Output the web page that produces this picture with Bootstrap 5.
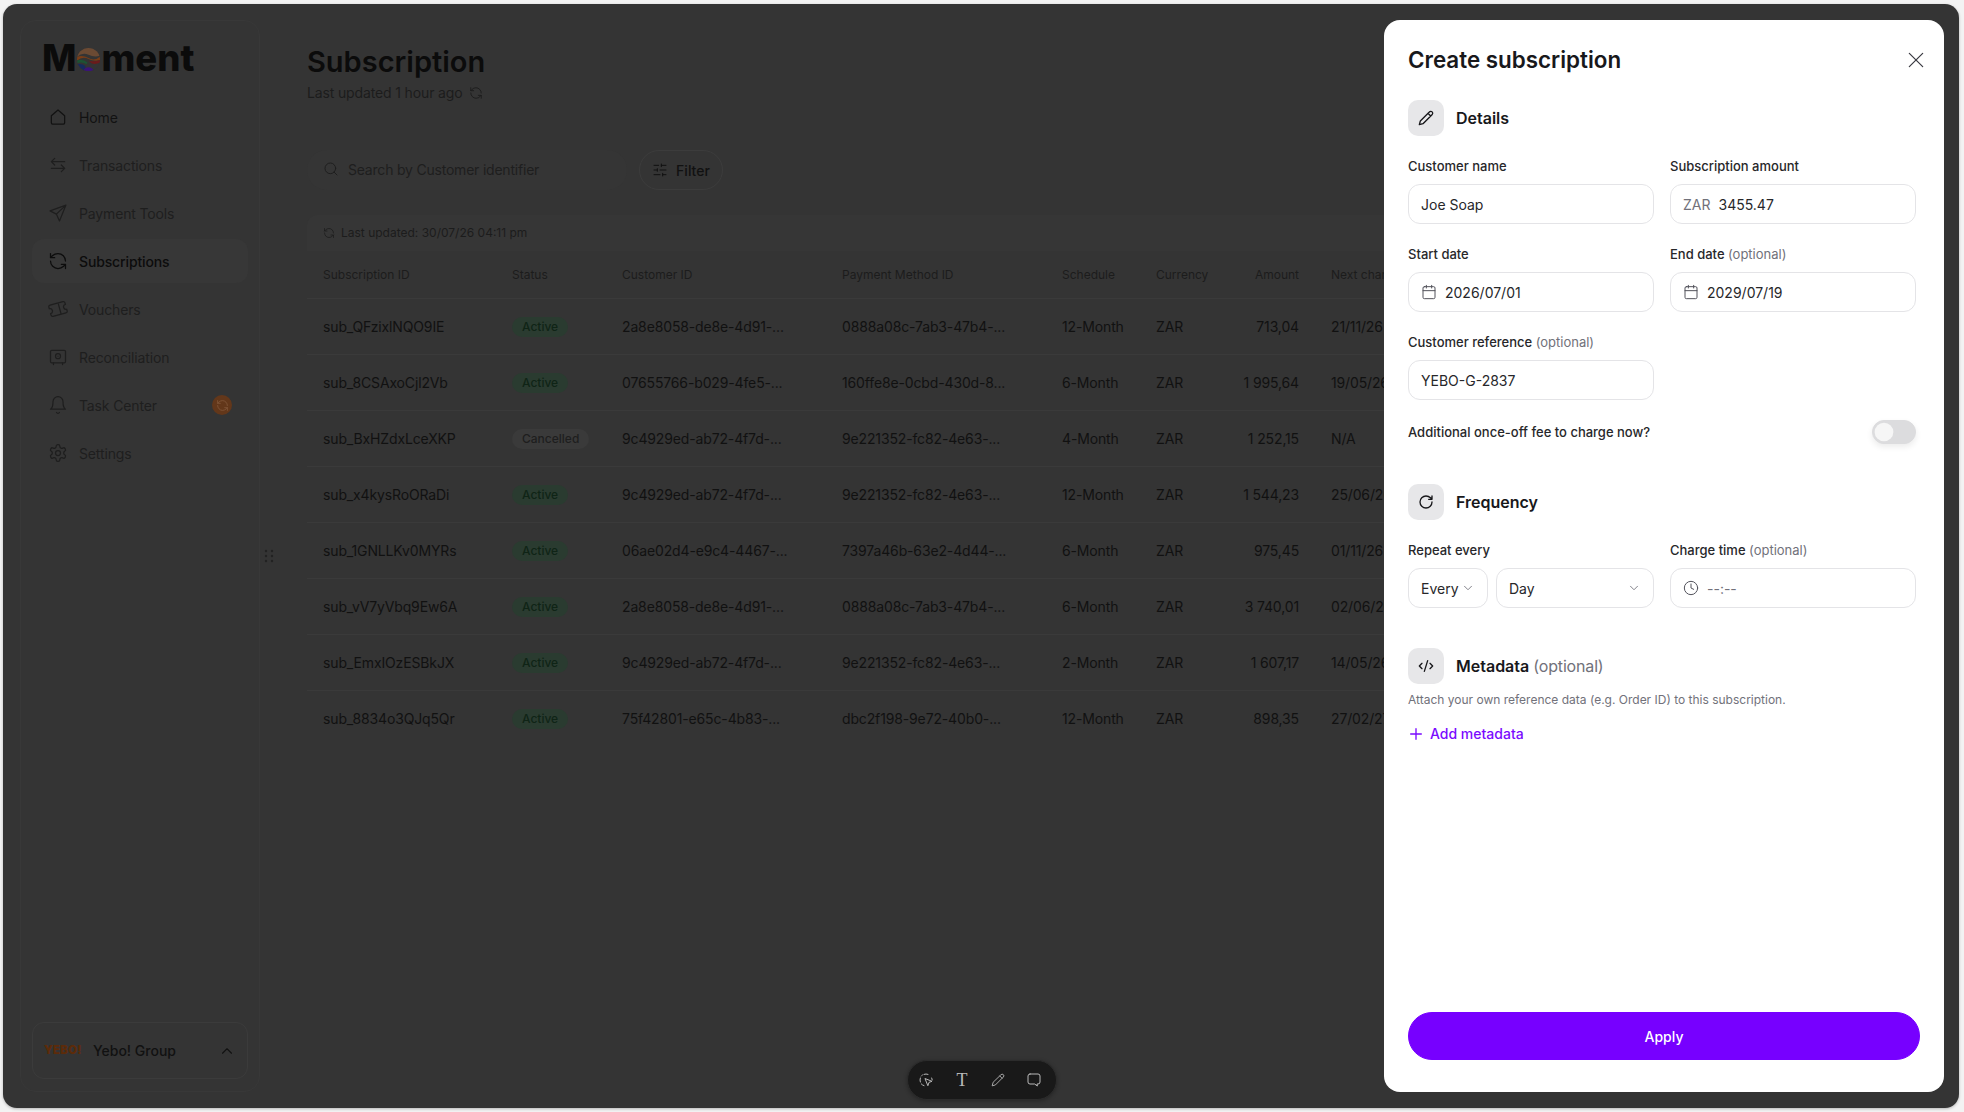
<!DOCTYPE html>
<html lang="en">
<head>
  <meta charset="UTF-8" />
  <meta name="viewport" content="width=device-width, initial-scale=1" />
  <title>Create subscription</title>
  <link href="https://cdn.jsdelivr.net/npm/bootstrap@5.3.2/dist/css/bootstrap.min.css" rel="stylesheet" />
  <style>
    html, body { height: 100%; }
    body { background: #f3f3f3; font-family: Inter, "Liberation Sans", sans-serif; overflow: hidden; }
    svg.ico { fill: none; stroke: currentColor; stroke-width: 1.5; stroke-linecap: round; stroke-linejoin: round; flex: none; }

    .app-window { position: relative; width: 1956px; height: 1104px; margin: 4px 0 0 3px; background: #343434; border-radius: 14px; overflow: hidden; box-shadow: 0 1px 3px rgba(0,0,0,.25); }

    /* sidebar */
    .side-panel { width: 240px; margin: 16px 0 16px 17px; padding: 0 11px 12px; border: 1px solid #383838; border-radius: 16px; }
    .brand { height: 28px; margin: 23px 0 23px 10px; font-size: 36.5px; font-weight: 800; line-height: 28px; color: #0b0b0b; }
    .brand svg { margin: 2px 1px 0; }
    .side-link { height: 44px; padding-left: 16px; gap: 11px; margin-bottom: 4px; font-size: 14px; letter-spacing: -.01em; color: #1e1e1e; border-radius: 12px; text-decoration: none; }
    .side-link.on-dark { color: #121212; }
    .side-link.current { color: #0c0c0c; background: #373737; font-weight: 500; }
    .task-badge { width: 20px; height: 20px; margin-left: auto; margin-right: 16px; border-radius: 50%; background: #63371a; color: #83583a; }
    .org-box { height: 57px; padding: 0 11px 0 11px; border: 1px solid #3b3b3b; border-radius: 12px; font-size: 14px; font-weight: 500; color: #111; }
    .yebo-mark { width: 37px; font-size: 11.5px; font-weight: 900; color: #5c2b0a; letter-spacing: .2px; margin-right: 12px; white-space: nowrap; }
    .drag-handle { width: 16px; padding-left: 2px; color: #222; }

    /* main */
    .main-col { min-width: 0; padding: 40px 0 0 31px; }
    .page-title { font-size: 29px; line-height: 36px; font-weight: 600; color: #0b0b0b; margin: 0 0 3px; }
    .page-sub { font-size: 14px; line-height: 20px; color: #1c1c1c; gap: 6px; letter-spacing: -.01em; }
    .search-box { width: 320px; height: 40px; padding: 0 0 2px 16px; gap: 9px; background: #353535; border-radius: 20px; font-size: 14px; letter-spacing: -.015em; color: #1e1e1e; }
    .filter-btn { width: 84px; height: 40px; gap: 8px; border: 1px solid #3c3c3c; border-radius: 20px; font-size: 14px; font-weight: 500; color: #111; }
    .tool-row { margin-top: 47px; gap: 12px; }
    .table-wrap { margin-top: 25px; width: 1500px; }
    .sync-strip { height: 36px; padding-left: 16px; gap: 6px; background: #363636; font-size: 12px; color: #1c1c1c; border-radius: 10px 10px 0 0; }
    .subs-table { --bs-table-bg: transparent; --bs-table-color: #111; --bs-table-border-color: #3a3a3a; table-layout: fixed; width: 1500px; font-size: 14px; letter-spacing: -.01em; }
    .subs-table col:nth-child(1) { width: 189px; }
    .subs-table col:nth-child(2) { width: 110px; }
    .subs-table col:nth-child(3), .subs-table col:nth-child(4) { width: 220px; }
    .subs-table col:nth-child(5) { width: 94px; }
    .subs-table col:nth-child(6) { width: 82px; }
    .subs-table col:nth-child(7) { width: 93px; }
    .subs-table th { height: 47px; padding: 1px 16px 0; font-size: 12px; font-weight: 400; color: #1c1c1c; vertical-align: middle; white-space: nowrap; letter-spacing: 0; }
    .subs-table td { height: 56px; padding: 0 16px; vertical-align: middle; white-space: nowrap; }
    .subs-table tbody tr:last-child td { border-bottom: 0; }
    .state-pill { display: inline-block; padding: 0 10px; line-height: 20px; border-radius: 10px; font-size: 12px; font-weight: 500; letter-spacing: 0; }
    .state-active { background: #2a3b30; color: #0f2416; }
    .state-off { background: #3a3a3a; color: #1e1e1e; }

    /* drawer */
    .drawer { position: absolute; top: 16px; left: 1381px; width: 560px; height: 1072px; padding: 24px 24px 32px; background: #fff; border-radius: 16px; color: #18181b; }
    .drawer-title { font-size: 22.4px; line-height: 32px; font-weight: 600; margin: 0; }
    .close-x { top: 30px; right: 18px; color: #3f3f46; background: none; border: 0; padding: 0; line-height: 0; }
    .form-area { width: 508px; }
    .sect-head { height: 36px; gap: 12px; font-size: 16px; font-weight: 600; color: #18181b; }
    .sect-icon { width: 36px; height: 36px; background: #e7e7e9; border-radius: 10px; color: #18181b; }
    .sect-icon svg.ico { stroke-width: 2; }
    .sect-head .opt { letter-spacing: -.01em; }
    .sect-gap { margin-top: 40px; }
    .sect-after { margin-bottom: 20px; }
    .opt { color: #71717a; font-weight: 400; }
    .fld-label { display: block; font-size: 13px; line-height: 20px; font-weight: 500; color: #27272a; margin-bottom: 8px; }
    .fld-rows > div { margin-bottom: 20px; }
    .fld { height: 40px; border: 1.5px solid #e4e4e7; border-radius: 12px; padding: 0 12px; gap: 8px; font-size: 14px; color: #27272a; background: #fff; }
    .fld input { border: 0; outline: 0; padding: 0; width: 100%; font: inherit; color: inherit; background: none; }
    .fld .unit, .fld input::placeholder { color: #71717a; }
    .fld svg { color: #52525b; }
    .fld svg.chev { color: #71717a; }
    .every-fld { width: 80px; flex: none; gap: 2px; }
    .switch-row { height: 24px; }
    .no-min { min-height: 0; }
    .form-switch .form-check-input { width: 44px; height: 24px; margin: 0; background-color: #dcdcde; border-color: #dcdcde; box-shadow: 0 3px 6px rgba(0,0,0,.08); --bs-form-switch-bg: url("data:image/svg+xml,%3csvg xmlns='http://www.w3.org/2000/svg' viewBox='-4 -4 8 8'%3e%3ccircle r='3.4' fill='%23f6f6f6'/%3e%3c/svg%3e"); }
    .hint { font-size: 12px; line-height: 16px; color: #71717a; }
    .add-link { font-size: 14px; line-height: 20px; font-weight: 500; color: #7a0aff; text-decoration: none; gap: 6px; }
    .add-link svg.ico { stroke-width: 2; }
    .apply-btn { height: 48px; width: 512px; background: #7700ff; border-color: #7700ff; border-radius: 24px; color: #fff; font-size: 14px; font-weight: 500; }

    /* bottom toolbar */
    .float-bar { position: absolute; left: 904px; top: 1056px; width: 150px; height: 40px; background: #191919; border: 1px solid #2c2c2c; border-radius: 20px; color: #b9b9b9; box-shadow: 0 1px 4px rgba(0,0,0,.3); }
    .bar-slot { width: 36px; height: 100%; }
    .bar-t { font-family: "Liberation Serif", serif; font-size: 18px; line-height: 1; }
  </style>
</head>
<body>

<svg width="0" height="0" class="position-absolute">
  <symbol id="i-home" viewBox="0 0 24 24"><path d="M4 10.5 12 3.5l8 7V19a1.5 1.5 0 0 1-1.5 1.5h-13A1.5 1.5 0 0 1 4 19Z"/></symbol>
  <symbol id="i-swap" viewBox="0 0 24 24"><path d="M20 8H4.5M8 4 4 8l4 4M4 16h15.5M16 12l4 4-4 4"/></symbol>
  <symbol id="i-send" viewBox="0 0 24 24"><path d="M21.5 2.5 2.5 9.5l7.5 3.8 3.8 8.2ZM21.5 2.5 10 13.3"/></symbol>
  <symbol id="i-sync" viewBox="0 0 24 24"><path d="M21 12a9 9 0 0 0-9-9 9.75 9.75 0 0 0-6.74 2.74L3 8M3 3v5h5M3 12a9 9 0 0 0 9 9 9.75 9.75 0 0 0 6.74-2.74L21 16M16 16h5v5"/></symbol>
  <symbol id="i-ticket" viewBox="0 0 24 24"><g transform="rotate(-15 12 12)"><path d="M2 9a3 3 0 0 1 0 6v2a2 2 0 0 0 2 2h16a2 2 0 0 0 2-2v-2a3 3 0 0 1 0-6V7a2 2 0 0 0-2-2H4a2 2 0 0 0-2 2ZM14 5v14"/></g></symbol>
  <symbol id="i-safe" viewBox="0 0 24 24"><rect x="3" y="4" width="18" height="15" rx="1.5"/><circle cx="12" cy="11" r="3"/><path d="M12 11v.01M6.5 19v2M17.5 19v2"/></symbol>
  <symbol id="i-bell" viewBox="0 0 24 24"><path d="M6 8a6 6 0 0 1 12 0c0 7 3 9 3 9H3s3-2 3-9M10.3 21a1.94 1.94 0 0 0 3.4 0"/></symbol>
  <symbol id="i-gear" viewBox="0 0 24 24"><path d="M12.22 2h-.44a2 2 0 0 0-2 2v.18a2 2 0 0 1-1 1.73l-.43.25a2 2 0 0 1-2 0l-.15-.08a2 2 0 0 0-2.73.73l-.22.38a2 2 0 0 0 .73 2.73l.15.1a2 2 0 0 1 1 1.72v.51a2 2 0 0 1-1 1.74l-.15.09a2 2 0 0 0-.73 2.73l.22.38a2 2 0 0 0 2.73.73l.15-.08a2 2 0 0 1 2 0l.43.25a2 2 0 0 1 1 1.73V20a2 2 0 0 0 2 2h.44a2 2 0 0 0 2-2v-.18a2 2 0 0 1 1-1.73l.43-.25a2 2 0 0 1 2 0l.15.08a2 2 0 0 0 2.73-.73l.22-.39a2 2 0 0 0-.73-2.73l-.15-.08a2 2 0 0 1-1-1.74v-.5a2 2 0 0 1 1-1.74l.15-.09a2 2 0 0 0 .73-2.73l-.22-.38a2 2 0 0 0-2.73-.73l-.15.08a2 2 0 0 1-2 0l-.43-.25a2 2 0 0 1-1-1.73V4a2 2 0 0 0-2-2z"/><circle cx="12" cy="12" r="3"/></symbol>
  <symbol id="i-search" viewBox="0 0 24 24"><circle cx="11" cy="11" r="8"/><path d="m21 21-4.3-4.3"/></symbol>
  <symbol id="i-sliders" viewBox="0 0 24 24"><path d="M21 5h-7M10 5H3M21 12h-9M8 12H3M21 19h-5M12 19H3M14 3v4M8 10v4M16 17v4"/></symbol>
  <symbol id="i-x" viewBox="0 0 24 24"><path d="M4 4l16 16M20 4 4 20"/></symbol>
  <symbol id="i-pencil" viewBox="0 0 24 24"><path d="M17 3a2.85 2.83 0 1 1 4 4L7.5 20.5 2 22l1.5-5.5ZM15 5l4 4"/></symbol>
  <symbol id="i-rotate" viewBox="0 0 24 24"><path d="M21 12a9 9 0 1 1-9-9c2.52 0 4.93 1 6.74 2.74L21 8M21 3v5h-5"/></symbol>
  <symbol id="i-code" viewBox="0 0 24 24"><path d="m18 16 4-4-4-4M6 8l-4 4 4 4M14.5 4l-5 16"/></symbol>
  <symbol id="i-cal" viewBox="0 0 24 24"><path d="M8 2v4M16 2v4M3 10h18"/><rect x="3" y="4" width="18" height="18" rx="2"/></symbol>
  <symbol id="i-clock" viewBox="0 0 24 24"><circle cx="12" cy="12" r="10"/><path d="M12 6v6l4 2"/></symbol>
  <symbol id="i-plus" viewBox="0 0 24 24"><path d="M12 4v16M4 12h16"/></symbol>
  <symbol id="i-down" viewBox="0 0 24 24"><path d="m6 9 6 6 6-6"/></symbol>
  <symbol id="i-up" viewBox="0 0 24 24"><path d="m6 15 6-6 6 6"/></symbol>
  <symbol id="i-select" viewBox="0 0 24 24"><path d="M9 3.5a9 9 0 0 1 6 0M3.5 9a9 9 0 0 0 0 6M20.5 9a9 9 0 0 1 .8 3M9 20.5a9 9 0 0 1-4-2.5M5 6a9 9 0 0 1 1.5-1.5"/><path d="m11 10 10 4-4.5 1.500L15 20Z"/></symbol>
  <symbol id="i-chat" viewBox="0 0 24 24"><path d="M6 3h12a3 3 0 0 1 3 3v9a3 3 0 0 1-3 3h-1.5l.5 3-4-3H6a3 3 0 0 1-3-3V6a3 3 0 0 1 3-3Z"/></symbol>
</svg>

<div class="app-window d-flex">
  <!-- Sidebar -->
  <aside class="side-panel d-flex flex-column flex-shrink-0">
    <div class="brand d-flex align-items-center">M<svg width="23" height="23" viewBox="0 0 24 24" class="flex-shrink-0">
        <defs><clipPath id="globe"><circle cx="12" cy="12" r="12"/></clipPath></defs>
        <g clip-path="url(#globe)">
          <rect width="24" height="24" fill="#343434"/>
          <path d="M0 0h24v8Q18 10 12 7T0 9Z" fill="#6b4a33"/>
          <path d="M0 9q6-2 12 1.5T24 9v3.5q-6 2-12-1T0 13Z" fill="#7a3d16"/>
          <path d="M0 13q6-2 11 2l-1 2q-5-3-10-1Z" fill="#1d5334"/>
          <path d="M12 13q6 2 12-.5v3q-5 2-9 .5Z" fill="#6b1b1b"/>
          <path d="M0 17q5-1 9 2l-2 5H0Z" fill="#162a5e"/>
          <path d="M6 24q2-4 6-4t6 4Z" fill="#3a1478"/>
        </g>
      </svg>ment</div>
    <nav class="nav flex-column">
      <a class="side-link on-dark d-flex align-items-center" href="#"><svg class="ico" width="20" height="20"><use href="#i-home"/></svg>Home</a>
      <a class="side-link d-flex align-items-center" href="#"><svg class="ico" width="20" height="20"><use href="#i-swap"/></svg>Transactions</a>
      <a class="side-link d-flex align-items-center" href="#"><svg class="ico" width="20" height="20"><use href="#i-send"/></svg>Payment Tools</a>
      <a class="side-link current d-flex align-items-center" href="#"><svg class="ico" width="20" height="20"><use href="#i-sync"/></svg>Subscriptions</a>
      <a class="side-link d-flex align-items-center" href="#"><svg class="ico" width="20" height="20"><use href="#i-ticket"/></svg>Vouchers</a>
      <a class="side-link d-flex align-items-center" href="#"><svg class="ico" width="20" height="20"><use href="#i-safe"/></svg>Reconciliation</a>
      <a class="side-link d-flex align-items-center" href="#"><svg class="ico" width="20" height="20"><use href="#i-bell"/></svg>Task Center<span class="task-badge d-flex align-items-center justify-content-center"><svg class="ico" width="13" height="13"><use href="#i-sync"/></svg></span></a>
      <a class="side-link d-flex align-items-center" href="#"><svg class="ico" width="20" height="20"><use href="#i-gear"/></svg>Settings</a>
    </nav>
    <div class="org-box d-flex align-items-center mt-auto">
      <span class="yebo-mark">YEBO!</span>Yebo! Group
      <svg class="ico ms-auto" width="18" height="18"><use href="#i-up"/></svg>
    </div>
  </aside>

  <div class="drag-handle d-flex align-items-center justify-content-center flex-shrink-0">
    <svg width="10" height="14" viewBox="0 0 10 14" fill="currentColor"><circle cx="2" cy="2" r="1.2"/><circle cx="8" cy="2" r="1.2"/><circle cx="2" cy="7" r="1.2"/><circle cx="8" cy="7" r="1.2"/><circle cx="2" cy="12" r="1.2"/><circle cx="8" cy="12" r="1.2"/></svg>
  </div>

  <!-- Main -->
  <main class="main-col flex-grow-1 overflow-hidden">
    <h1 class="page-title">Subscription</h1>
    <div class="page-sub d-flex align-items-center">Last updated 1 hour ago <svg class="ico" width="14" height="14"><use href="#i-sync"/></svg></div>

    <div class="tool-row d-flex">
      <div class="search-box d-flex align-items-center"><svg class="ico" width="16" height="16"><use href="#i-search"/></svg>Search by Customer identifier</div>
      <div class="filter-btn d-flex align-items-center justify-content-center"><svg class="ico" width="16" height="16"><use href="#i-sliders"/></svg>Filter</div>
    </div>

    <div class="table-wrap">
      <div class="sync-strip d-flex align-items-center"><svg class="ico" width="12" height="12"><use href="#i-sync"/></svg>Last updated: 30/07/26 04:11 pm</div>
      <table class="table subs-table mb-0">
        <colgroup><col><col><col><col><col><col><col><col></colgroup>
        <thead>
          <tr><th>Subscription ID</th><th>Status</th><th>Customer ID</th><th>Payment Method ID</th><th>Schedule</th><th>Currency</th><th class="text-end">Amount</th><th>Next charge</th></tr>
        </thead>
        <tbody id="rows"></tbody>
      </table>
    </div>
  </main>

  <!-- Create subscription drawer -->
  <section class="drawer d-flex flex-column">
    <h2 class="drawer-title">Create subscription</h2>
    <button type="button" class="close-x position-absolute" aria-label="Close"><svg class="ico" width="20" height="20"><use href="#i-x"/></svg></button>

    <form class="form-area">
      <div class="sect-head sect-after d-flex align-items-center mt-4">
        <span class="sect-icon d-flex align-items-center justify-content-center"><svg class="ico" width="16" height="16"><use href="#i-pencil"/></svg></span>Details
      </div>
      <div class="row gx-3 fld-rows">
        <div class="col-6"><label class="fld-label">Customer name</label><div class="fld d-flex align-items-center"><input type="text" value="Joe Soap"></div></div>
        <div class="col-6"><label class="fld-label">Subscription amount</label><div class="fld d-flex align-items-center"><span class="unit">ZAR</span><input type="text" value="3455.47"></div></div>
        <div class="col-6"><label class="fld-label">Start date</label><div class="fld d-flex align-items-center"><svg class="ico" width="16" height="16"><use href="#i-cal"/></svg><input type="text" value="2026/07/01"></div></div>
        <div class="col-6"><label class="fld-label">End date <span class="opt">(optional)</span></label><div class="fld d-flex align-items-center"><svg class="ico" width="16" height="16"><use href="#i-cal"/></svg><input type="text" value="2029/07/19"></div></div>
        <div class="col-6"><label class="fld-label">Customer reference <span class="opt">(optional)</span></label><div class="fld d-flex align-items-center"><input type="text" value="YEBO-G-2837"></div></div>
      </div>
      <div class="d-flex align-items-center justify-content-between switch-row">
        <span class="fld-label mb-0">Additional once-off fee to charge now?</span>
        <div class="form-check form-switch p-0 m-0 no-min d-flex"><input class="form-check-input" type="checkbox" role="switch"></div>
      </div>

      <div class="sect-head sect-gap sect-after d-flex align-items-center">
        <span class="sect-icon d-flex align-items-center justify-content-center"><svg class="ico" width="16" height="16"><use href="#i-rotate"/></svg></span>Frequency
      </div>
      <div class="row gx-3">
        <div class="col-6">
          <label class="fld-label">Repeat every</label>
          <div class="d-flex gap-2">
            <div class="fld every-fld d-flex align-items-center">Every<svg class="ico chev" width="14" height="14"><use href="#i-down"/></svg></div>
            <div class="fld flex-grow-1 d-flex align-items-center justify-content-between">Day<svg class="ico chev" width="14" height="14"><use href="#i-down"/></svg></div>
          </div>
        </div>
        <div class="col-6"><label class="fld-label">Charge time <span class="opt">(optional)</span></label><div class="fld d-flex align-items-center"><svg class="ico" width="16" height="16"><use href="#i-clock"/></svg><input type="text" placeholder="--:--"></div></div>
      </div>

      <div class="sect-head sect-gap d-flex align-items-center">
        <span class="sect-icon d-flex align-items-center justify-content-center"><svg class="ico" width="16" height="16"><use href="#i-code"/></svg></span><span>Metadata <span class="opt">(optional)</span></span>
      </div>
      <div class="hint mt-2">Attach your own reference data (e.g. Order ID) to this subscription.</div>
      <a href="#" class="add-link d-inline-flex align-items-center mt-3"><svg class="ico" width="16" height="16"><use href="#i-plus"/></svg>Add metadata</a>
    </form>

    <button type="button" class="btn apply-btn mt-auto">Apply</button>
  </section>

  <!-- Toolbar over the page -->
  <div class="float-bar d-flex align-items-center">
    <span class="bar-slot d-flex align-items-center justify-content-center"><svg class="ico" width="16" height="16"><use href="#i-select"/></svg></span>
    <span class="bar-slot d-flex align-items-center justify-content-center bar-t">T</span>
    <span class="bar-slot d-flex align-items-center justify-content-center"><svg class="ico" width="14" height="14"><use href="#i-pencil"/></svg></span>
    <span class="bar-slot d-flex align-items-center justify-content-center"><svg class="ico" width="16" height="16"><use href="#i-chat"/></svg></span>
  </div>
</div>

<script>
  const rows = [
    ["sub_QFzixlNQO9IE", "Active", "2a8e8058-de8e-4d91-...", "0888a08c-7ab3-47b4-...", "12-Month", "713,04", "21/11/26"],
    ["sub_8CSAxoCjl2Vb", "Active", "07655766-b029-4fe5-...", "160ffe8e-0cbd-430d-8...", "6-Month", "1 995,64", "19/05/26"],
    ["sub_BxHZdxLceXKP", "Cancelled", "9c4929ed-ab72-4f7d-...", "9e221352-fc82-4e63-...", "4-Month", "1 252,15", "N/A"],
    ["sub_x4kysRoORaDi", "Active", "9c4929ed-ab72-4f7d-...", "9e221352-fc82-4e63-...", "12-Month", "1 544,23", "25/06/26"],
    ["sub_1GNLLKv0MYRs", "Active", "06ae02d4-e9c4-4467-...", "7397a46b-63e2-4d44-...", "6-Month", "975,45", "01/11/26"],
    ["sub_vV7yVbq9Ew6A", "Active", "2a8e8058-de8e-4d91-...", "0888a08c-7ab3-47b4-...", "6-Month", "3 740,01", "02/06/26"],
    ["sub_EmxIOzESBkJX", "Active", "9c4929ed-ab72-4f7d-...", "9e221352-fc82-4e63-...", "2-Month", "1 607,17", "14/05/26"],
    ["sub_8834o3QJq5Qr", "Active", "75f42801-e65c-4b83-...", "dbc2f198-9e72-40b0-...", "12-Month", "898,35", "27/02/27"]
  ];
  const tbody = document.getElementById("rows");
  rows.forEach(r => {
    const pill = r[1] === "Active" ? "state-active" : "state-off";
    tbody.innerHTML += `
      <tr>
        <td>${r[0]}</td>
        <td><span class="state-pill ${pill}">${r[1]}</span></td>
        <td>${r[2]}</td>
        <td>${r[3]}</td>
        <td>${r[4]}</td>
        <td>ZAR</td>
        <td class="text-end">${r[5]}</td>
        <td>${r[6]}</td>
      </tr>`;
  });
</script>

<script src="https://cdn.jsdelivr.net/npm/bootstrap@5.3.2/dist/js/bootstrap.bundle.min.js"></script>
</body>
</html>
